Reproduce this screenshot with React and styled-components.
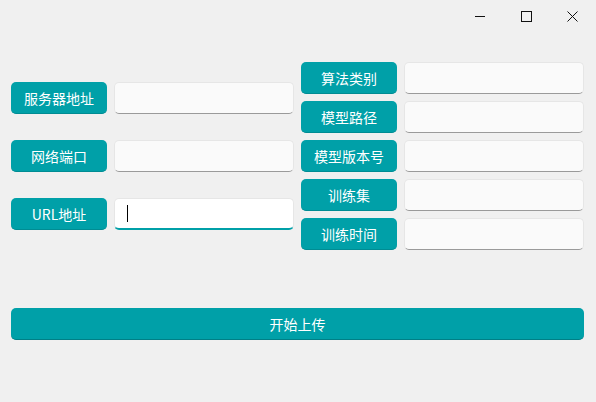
import React from 'react'
import styled, { createGlobalStyle } from 'styled-components'

const Global = createGlobalStyle`
  html, body {
    margin: 0;
    padding: 0;
    background: #f0f0f0;
    font-family: "Noto Sans CJK SC", "Noto Sans", sans-serif;
  }
  * { box-sizing: border-box; }
`

const leftFields = [
  { label: '服务器地址', value: '' },
  { label: '网络端口', value: '' },
  { label: 'URL地址', value: '', focused: true },
]

const rightFields = ['算法类别', '模型路径', '模型版本号', '训练集', '训练时间']

const App = () => {
  return (
    <Window>
      <Global />
      <TitleBar>
        <WinButton>
          <svg width="10" height="10" viewBox="0 0 10 10">
            <line x1="0" y1="5.5" x2="11" y2="5.5" stroke="#111" strokeWidth="1" />
          </svg>
        </WinButton>
        <WinButton>
          <svg width="11" height="11" viewBox="0 0 11 11">
            <rect x="0.5" y="0.5" width="10" height="10" fill="none" stroke="#111" strokeWidth="1" />
          </svg>
        </WinButton>
        <WinButton>
          <svg width="11" height="11" viewBox="0 0 11 11">
            <path d="M0.5 0.5 L10.5 10.5 M10.5 0.5 L0.5 10.5" stroke="#111" strokeWidth="1" />
          </svg>
        </WinButton>
      </TitleBar>
      <Form>
        <Column gap={26}>
          {leftFields.map((f) => (
            <Row key={f.label}>
              <Label>{f.label}</Label>
              <Field focused={f.focused}>
                {f.focused && <Caret />}
              </Field>
            </Row>
          ))}
        </Column>
        <Column gap={7}>
          {rightFields.map((l) => (
            <Row key={l}>
              <Label>{l}</Label>
              <Field />
            </Row>
          ))}
        </Column>
      </Form>
      <Footer>
        <UploadButton>开始上传</UploadButton>
      </Footer>
    </Window>
  )
}

export default App

const Window = styled.div`
  width: 596px;
  height: 402px;
  background: #f0f0f0;
  display: flex;
  flex-direction: column;
`

const TitleBar = styled.div`
  height: 32px;
  display: flex;
  justify-content: flex-end;
  padding-right: 1px;
`

const WinButton = styled.div`
  width: 46px;
  height: 32px;
  display: flex;
  align-items: center;
  justify-content: center;
  svg { display: block; }
`

const Form = styled.div`
  display: grid;
  grid-template-columns: 283px 283px;
  column-gap: 7px;
  padding: 30px 12px 0 11px;
  align-items: center;
`

const Column = styled.div`
  display: flex;
  flex-direction: column;
  gap: ${({ gap }) => gap}px;
`

const Row = styled.div`
  display: flex;
  gap: 7px;
  align-items: center;
`

const Label = styled.div`
  width: 96px;
  height: 32px;
  border-radius: 5px;
  background: #00a0a8;
  color: #ffffff;
  font-size: 14px;
  display: flex;
  align-items: center;
  justify-content: center;
  border-bottom: 1px solid #008c93;
`

const Field = styled.div`
  width: 180px;
  height: 32px;
  border-radius: 5px;
  background: ${({ focused }) => (focused ? '#ffffff' : '#fafafa')};
  border: 1px solid #e6e6e6;
  border-bottom: ${({ focused }) => (focused ? '2px solid #00a0a8' : '1px solid #9a9a9a')};
  display: flex;
  align-items: center;
  padding-left: 12px;
`

const Caret = styled.div`
  width: 1px;
  height: 17px;
  background: #000;
`

const Footer = styled.div`
  padding: 58px 12px 0 11px;
`

const UploadButton = styled.div`
  height: 32px;
  border-radius: 5px;
  background: #00a0a8;
  border-bottom: 1px solid #007f86;
  color: #ffffff;
  font-size: 14px;
  display: flex;
  align-items: center;
  justify-content: center;
`
